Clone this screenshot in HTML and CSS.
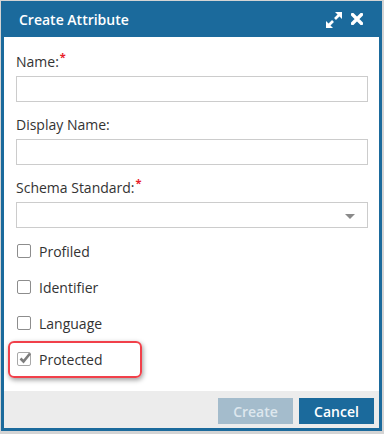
FILE: index.html
```html
<!DOCTYPE html>
<html>
<head>
<meta charset="utf-8">
<link rel="stylesheet" href="styles.css">
</head>
<body>
<div class="dialog">
  <div class="titlebar">
    <span class="title">Create Attribute</span>
    <span class="tools">
      <svg class="ico-expand" width="16" height="16" viewBox="0 0 16 16">
        <polygon points="9,0 16,0 16,7" fill="#fff"/>
        <line x1="13" y1="3" x2="9" y2="7" stroke="#fff" stroke-width="2.6"/>
        <polygon points="0,9 0,16 7,16" fill="#fff"/>
        <line x1="3" y1="13" x2="7" y2="9" stroke="#fff" stroke-width="2.6"/>
      </svg>
      <svg class="ico-close" width="12" height="12" viewBox="0 0 12 12">
        <path d="M1.5 1.5 L10.5 10.5 M10.5 1.5 L1.5 10.5" stroke="#fff" stroke-width="3.4" stroke-linecap="round"/>
      </svg>
    </span>
  </div>
  <div class="body">
    <div class="field">
      <label class="lbl">Name:<sup class="req">*</sup></label>
      <div class="input"></div>
    </div>
    <div class="field">
      <label class="lbl">Display Name:</label>
      <div class="input"></div>
    </div>
    <div class="field">
      <label class="lbl">Schema Standard:<sup class="req">*</sup></label>
      <div class="input select"><span class="caret"></span></div>
    </div>
    <div class="checks">
      <div class="row"><span class="box"></span><span class="ctext">Profiled</span></div>
      <div class="row"><span class="box"></span><span class="ctext">Identifier</span></div>
      <div class="row"><span class="box"></span><span class="ctext">Language</span></div>
      <div class="row highlighted">
        <span class="box checked">
          <svg width="15" height="14" viewBox="0 0 15 14"><path d="M3.5 7.5 L6.5 10.5 L13 2.5" fill="none" stroke="#7d7d7d" stroke-width="2.6"/></svg>
        </span>
        <span class="ctext">Protected</span>
        <span class="mark"></span>
      </div>
    </div>
  </div>
  <div class="footer">
    <button class="btn disabled">Create</button>
    <button class="btn primary">Cancel</button>
  </div>
</div>
</body>
</html>
```
FILE: styles.css
```css
html, body {
  margin: 0;
  padding: 0;
}
body {
  background: #d4d4d4;
  font-family: "Open Sans", "Liberation Sans", sans-serif;
  width: 384px;
  height: 434px;
  overflow: hidden;
}
.dialog {
  box-sizing: border-box;
  margin: 1px 0 0 1px;
  width: 381px;
  height: 430px;
  border: 3px solid #1b6a9c;
  border-top: 0;
  background: #fff;
  display: flex;
  flex-direction: column;
}
.titlebar {
  height: 36px;
  flex: none;
  background: #1b6a9c;
  margin: 0 -3px;
  padding: 0 19px 0 18px;
  display: flex;
  align-items: center;
  justify-content: space-between;
}
.title {
  color: #fff;
  font-weight: 600;
  font-size: 14px;
}
.tools {
  display: flex;
  align-items: center;
  gap: 9px;
}
.ico-expand { margin-top: 1px; }
.body {
  flex: 1;
  padding: 15px 11px 0 12px;
}
.field {
  margin-bottom: 13px;
}
.lbl {
  display: block;
  font-size: 14px;
  line-height: 20px;
  color: #333;
  margin-bottom: 4px;
}
.req {
  color: #e8202a;
  font-size: 11px;
  font-weight: 700;
  line-height: 0;
  vertical-align: 6px;
  margin-left: 1px;
}
.input {
  box-sizing: border-box;
  height: 26px;
  border: 1px solid #cccccc;
  position: relative;
}
.caret {
  position: absolute;
  right: 12px;
  top: 11px;
  width: 0;
  height: 0;
  border-left: 5px solid transparent;
  border-right: 5px solid transparent;
  border-top: 5px solid #8a8a8a;
}
.checks {
  margin-top: -8px;
}
.row {
  height: 36px;
  display: flex;
  align-items: center;
  position: relative;
  padding-left: 1px;
}
.box {
  box-sizing: border-box;
  width: 14px;
  height: 14px;
  border: 1px solid #8d8d8d;
  border-radius: 2px;
  position: relative;
  flex: none;
}
.box.checked {
  border-color: #a8a8a8;
}
.box svg {
  position: absolute;
  left: -1px;
  top: -2px;
}
.ctext {
  margin-left: 8px;
  font-size: 14px;
  color: #333;
}
.mark {
  position: absolute;
  left: -8px;
  top: 0;
  width: 134px;
  height: 37px;
  box-sizing: border-box;
  border: 2.5px solid #f1404a;
  border-radius: 6px;
  box-shadow: 1px 2px 5px rgba(0,0,0,0.4);
}
.footer {
  flex: none;
  height: 37px;
  background: #ececec;
  display: flex;
  justify-content: flex-end;
  align-items: flex-start;
  gap: 6px;
  padding: 7px 5px 0 0;
  box-sizing: border-box;
}
.btn {
  width: 75px;
  height: 26px;
  border: 0;
  font-family: "Open Sans", "Liberation Sans", sans-serif;
  font-weight: 600;
  font-size: 14px;
  padding: 0;
}
.btn.disabled {
  background: #a4bccc;
  color: #dde7ee;
}
.btn.primary {
  background: #1b6a9c;
  color: #fff;
}
```
